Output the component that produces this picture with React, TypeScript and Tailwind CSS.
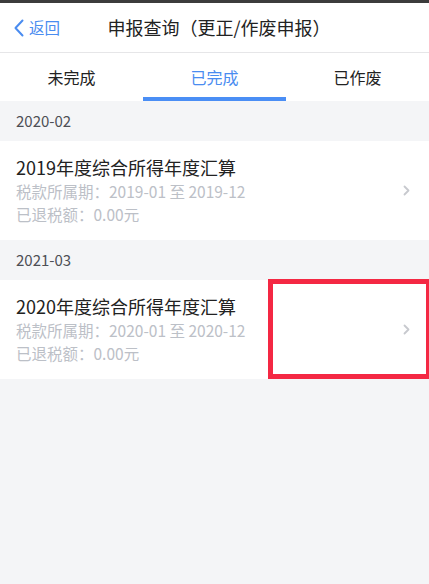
import React, { useState } from 'react';

const FONT = '"Noto Sans CJK SC", "Noto Sans", sans-serif';

interface Record {
  month: string;
  title: string;
  period: string;
  refund: string;
  marked?: boolean;
}

const records: Record[] = [
  { month: '2020-02', title: '2019年度综合所得年度汇算', period: '2019-01 至 2019-12', refund: '0.00元' },
  { month: '2021-03', title: '2020年度综合所得年度汇算', period: '2020-01 至 2020-12', refund: '0.00元', marked: true },
];

const tabs = ['未完成', '已完成', '已作废'];

function Chevron() {
  return (
    <svg width="7" height="11" viewBox="0 0 7 11" fill="none">
      <path d="M1.5 1.5L5.5 5.5L1.5 9.5" stroke="#c7c9ce" strokeWidth="1.8" strokeLinecap="round" strokeLinejoin="round" />
    </svg>
  );
}

export default function App() {
  const [active, setActive] = useState(1);

  return (
    <div className="w-[429px] h-[584px] bg-[#f4f5f7] overflow-hidden" style={{ fontFamily: FONT }}>
      {/* status bar remnant */}
      <div className="h-[3px] bg-[#3c3c3c]" />

      {/* Header */}
      <div className="relative h-[50px] bg-white flex items-center justify-center border-b border-[#e6e6e8]">
        <button className="absolute left-[13px] top-0 h-full flex items-center text-[#4a8cf0] text-[15.5px]">
          <svg width="12" height="18" viewBox="0 0 12 18" fill="none" className="mr-[4px]">
            <path d="M9.5 1.5L2.5 9L9.5 16.5" stroke="#4a8cf0" strokeWidth="2" strokeLinecap="round" strokeLinejoin="round" />
          </svg>
          返回
        </button>
        <h1 className="text-[18px] text-[#222] font-normal ml-[9px]">申报查询（更正/作废申报）</h1>
      </div>

      {/* Tabs */}
      <div className="grid grid-cols-3 h-[48px] bg-white">
        {tabs.map((t, i) => (
          <button
            key={t}
            onClick={() => setActive(i)}
            className={
              'relative flex items-center justify-center text-[16px] ' +
              (i === active ? 'text-[#4a8cf0]' : 'text-[#222]')
            }
          >
            {t}
            {i === active && <span className="absolute left-0 right-0 bottom-0 h-[4px] bg-[#4a8ef5]" />}
          </button>
        ))}
      </div>

      {/* Records */}
      {records.map((r) => (
        <div key={r.month}>
          <div className="h-[40px] flex items-center pl-[16px] text-[15px] text-[#4d4f55]">{r.month}</div>
          <div className="relative bg-white flex items-center pl-[16px] pr-[19px] pt-[13px] pb-[14px]">
            <div className="flex-1">
              <div className="text-[18px] leading-[26px] text-[#222]">{r.title}</div>
              <div className="text-[15.5px] leading-[23px] text-[#bcc0c7]">税款所属期：{r.period}</div>
              <div className="text-[15.5px] leading-[23px] text-[#bcc0c7]">已退税额：{r.refund}</div>
            </div>
            <Chevron />
            {r.marked && (
              <div className="absolute left-[268px] -right-[2px] -top-[1px] bottom-0 border-[5px] border-[#f42843]" />
            )}
          </div>
        </div>
      ))}
    </div>
  );
}
